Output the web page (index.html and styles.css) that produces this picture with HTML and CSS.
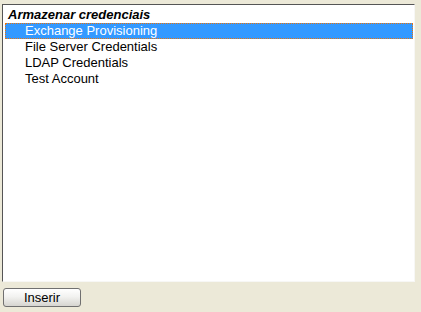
FILE: index.html
```html
<!DOCTYPE html>
<html>
<head>
<meta charset="utf-8">
<link rel="stylesheet" href="styles.css">
</head>
<body>
<div class="page">
  <div class="listbox">
    <div class="group">Armazenar credenciais</div>
    <div class="item selected">Exchange Provisioning</div>
    <div class="item">File Server Credentials</div>
    <div class="item">LDAP Credentials</div>
    <div class="item">Test Account</div>
  </div>
  <div class="actions">
    <button class="btn" type="button">Inserir</button>
  </div>
</div>
</body>
</html>
```

FILE: styles.css
```css
html, body {
  margin: 0;
  padding: 0;
  background: #ece9d8;
  width: 421px;
  height: 312px;
  overflow: hidden;
  font-family: "Liberation Sans", Arial, sans-serif;
  font-size: 13px;
  color: #000;
}
.page {
  display: flex;
  flex-direction: column;
  padding: 4px 0 0 2px;
}
.listbox {
  box-sizing: border-box;
  width: 413px;
  height: 278px;
  background: #fff;
  border-top: 1px solid #555;
  border-left: 1px solid #555;
  border-right: 1px solid #f7f7f5;
  border-bottom: 1px solid #f7f7f5;
  padding: 2px 0 0 2px;
}
.group {
  height: 16px;
  line-height: 16px;
  padding-left: 3px;
  font-weight: bold;
  font-style: italic;
}
.item {
  box-sizing: border-box;
  height: 16px;
  line-height: 14px;
  width: 408px;
  padding-left: 19px;
  border: 1px dotted transparent;
}
.item.selected {
  background: #3399ff;
  color: #fff;
  border-color: #e8730c;
}
.actions {
  display: flex;
  padding: 6px 0 0 1px;
}
.btn {
  box-sizing: border-box;
  width: 78px;
  height: 19px;
  padding: 0;
  font-family: "Liberation Sans", Arial, sans-serif;
  font-size: 13px;
  line-height: 15px;
  color: #000;
  border: 1px solid #707070;
  border-radius: 3px;
  background: linear-gradient(#ffffff 0%, #f2f2f0 45%, #d6d5d0 100%);
}
```
